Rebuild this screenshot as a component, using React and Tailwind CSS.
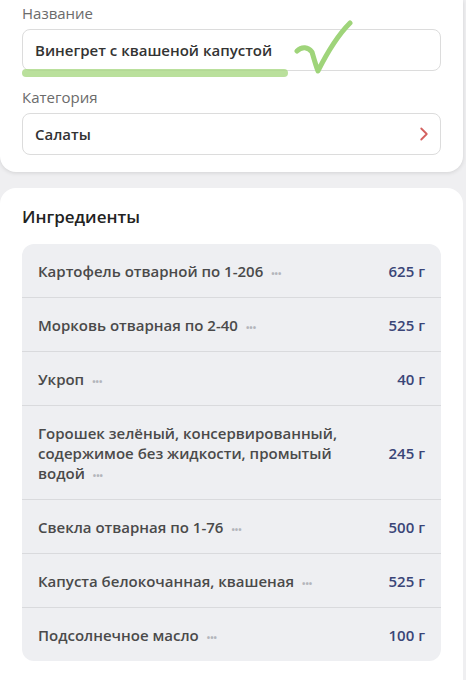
import { ChevronRight } from 'lucide-react';

const ingredients = [
  { name: 'Картофель отварной по 1-206', amount: '625 г' },
  { name: 'Морковь отварная по 2-40', amount: '525 г' },
  { name: 'Укроп', amount: '40 г' },
  { name: 'Горошек зелёный, консервированный, содержимое без жидкости, промытый водой', amount: '245 г' },
  { name: 'Свекла отварная по 1-76', amount: '500 г' },
  { name: 'Капуста белокочанная, квашеная', amount: '525 г' },
  { name: 'Подсолнечное масло', amount: '100 г' },
];

function Dots() {
  return <span className="ml-2 text-[9px] font-bold leading-none text-[#b3b5bb]">•••</span>;
}

export default function App() {
  return (
    <div className="min-h-[680px] bg-[#efeff1] font-['Open_Sans',sans-serif]">
      {/* Main info card */}
      <div className="mr-[3px] rounded-b-2xl bg-white px-[22px] pb-[17px] shadow-[0_1px_4px_rgba(0,0,0,0.12)]">
        <label className="block pt-[3px] text-[15px] leading-5 text-[#6b6b6b]">Название</label>
        <div className="relative mt-[6px]">
          <div className="flex h-[42px] items-center rounded-lg border border-[#dcdcdc] px-3 text-[15px] font-semibold text-[#333]">
            Винегрет с квашеной капустой
          </div>
          {/* hand-drawn annotation */}
          <div className="absolute left-0 top-[40px] h-[8px] w-[266px] rounded-sm bg-[#a9d883]/80" />
          <svg className="pointer-events-none absolute left-[272px] top-[-10px]" width="62" height="60" viewBox="0 0 62 60">
            <path
              d="M3 32 C8 27 14 28 18 33 C20 40 22 47 24 52 C32 36 42 18 56 4"
              fill="none"
              stroke="#9fd47a"
              strokeWidth="5"
              strokeLinecap="round"
              strokeLinejoin="round"
            />
          </svg>
        </div>
        <label className="mt-[16px] block text-[15px] leading-5 text-[#6b6b6b]">Категория</label>
        <div className="mt-[6px] flex h-[42px] items-center justify-between rounded-lg border border-[#dcdcdc] pl-3 pr-[5px] text-[15px] font-semibold text-[#333]">
          <span>Салаты</span>
          <ChevronRight size={22} strokeWidth={2} className="text-[#d4615f]" />
        </div>
      </div>

      {/* Ingredients card */}
      <div className="mr-[3px] mt-4 rounded-t-2xl bg-white px-[22px] pb-5 pt-[17px]">
        <h2 className="text-[17px] font-semibold leading-6 text-[#222]">Ингредиенты</h2>
        <div className="mt-[15px] overflow-hidden rounded-xl bg-[#eeeff2]">
          {ingredients.map((item, i) => (
            <div
              key={item.name}
              className={`flex items-center justify-between gap-4 pb-4 pl-4 pr-4 pt-[17px] ${
                i > 0 ? 'border-t border-[#d9dadd]' : ''
              }`}
            >
              <p className="max-w-[310px] text-[15px] font-semibold leading-5 text-[#4a4a4a]">
                {item.name}
                <Dots />
              </p>
              <span className="shrink-0 text-[15px] font-semibold leading-5 text-[#3a4577]">{item.amount}</span>
            </div>
          ))}
        </div>
      </div>
    </div>
  );
}
